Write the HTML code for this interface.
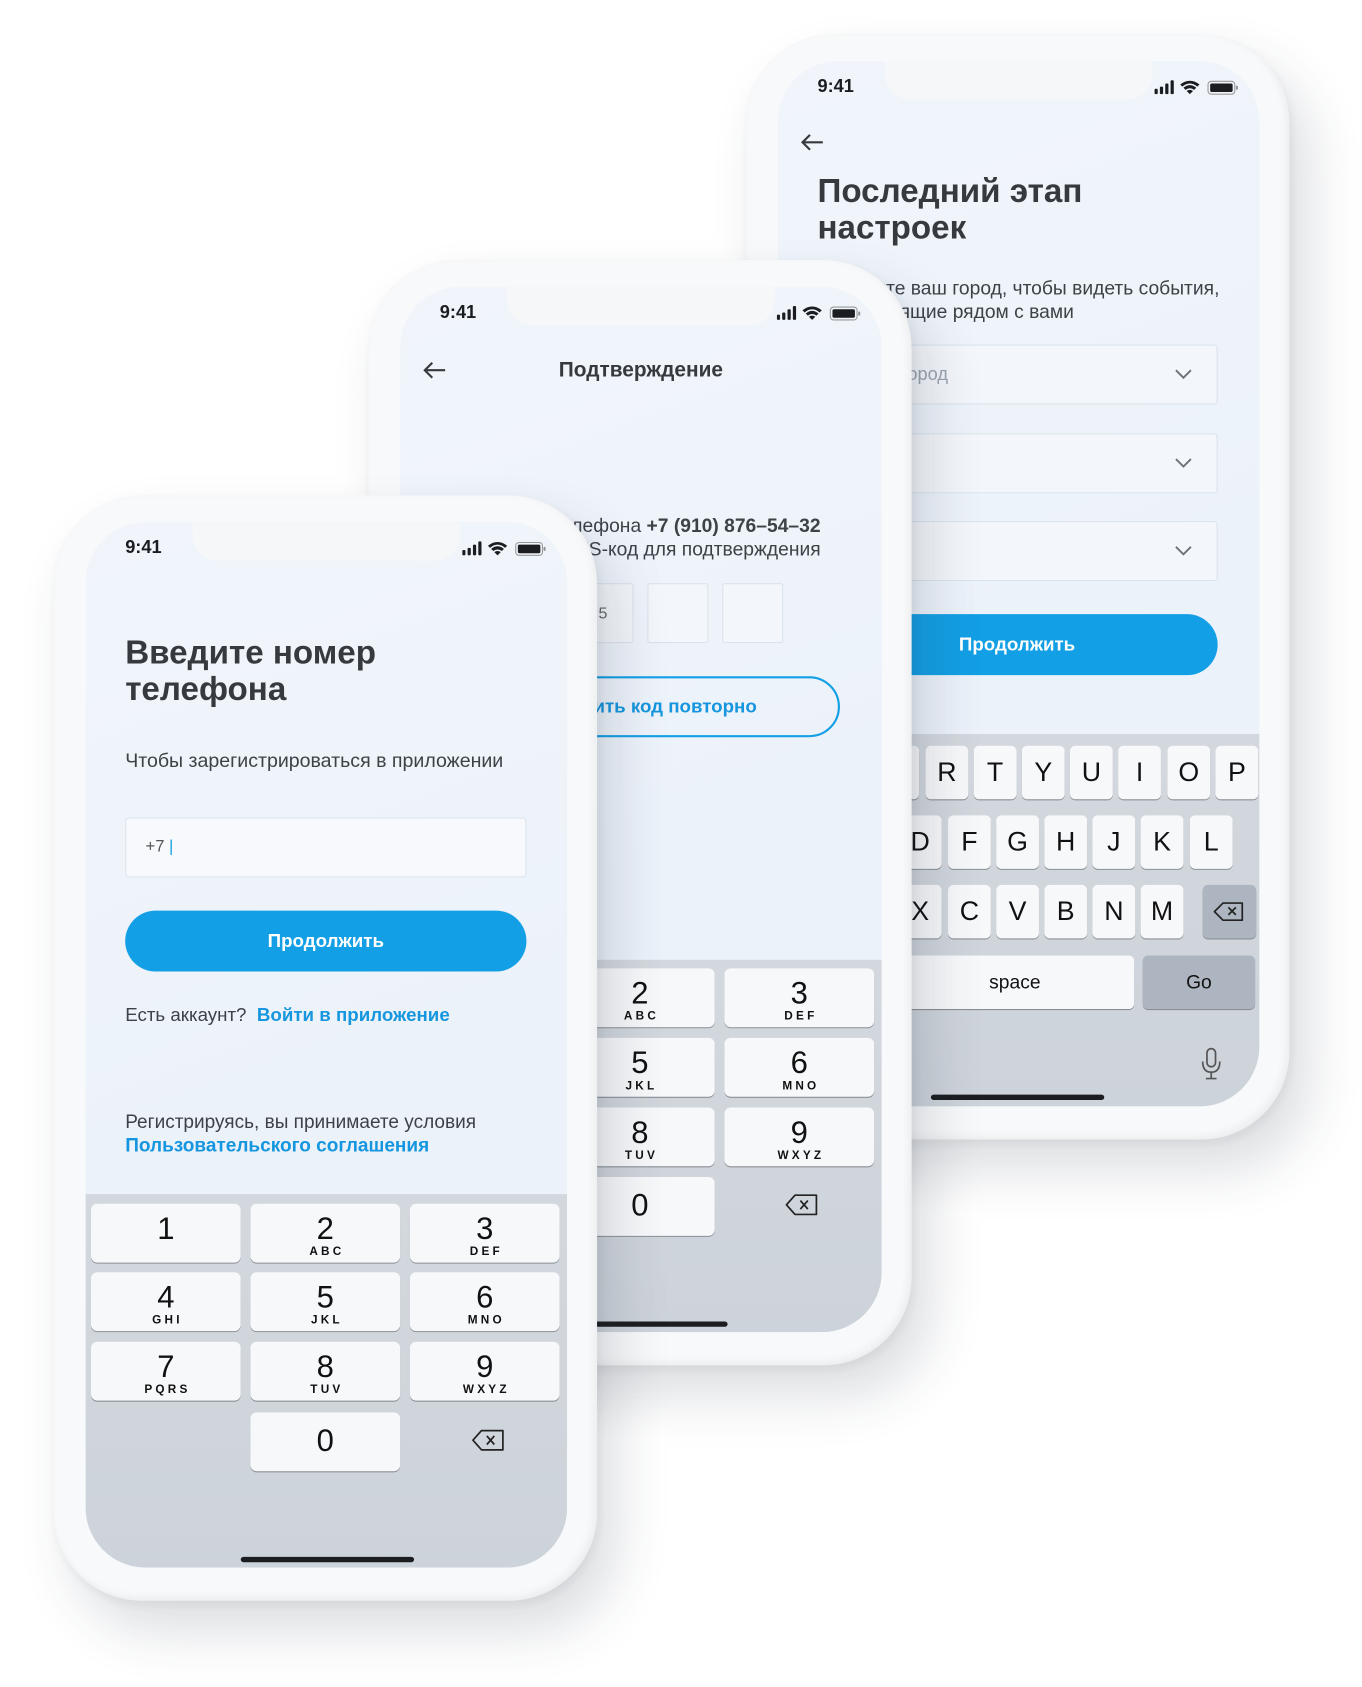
<!DOCTYPE html>
<html><head><meta charset="utf-8">
<style>
*{margin:0;padding:0;box-sizing:border-box}
html,body{width:1362px;height:1678px;overflow:hidden;background:#fff;font-family:"Liberation Sans","DejaVu Sans",sans-serif}
#wrap{position:absolute;left:0;top:0;width:1280px;height:1577px;transform:scale(1.070);transform-origin:0 0}
.phone{position:absolute;width:508px;height:1033px;border-radius:82px;background:#f8f9fa;box-shadow:18px 28px 50px rgba(40,50,70,.16),2px 4px 10px rgba(0,0,0,.06),inset -3px -3px 8px rgba(0,0,0,.05)}
.screen{position:absolute;left:30px;top:25px;width:450px;height:977px;border-radius:56px;overflow:hidden;background:linear-gradient(160deg,#f1f5fb,#e8f0f9)}
.notch{position:absolute;left:100px;top:0;width:250px;height:36px;background:#f6f7f9;border-radius:0 0 24px 24px}
.time{position:absolute;left:37px;top:14px;font-size:17px;font-weight:bold;color:#1b1d20}
.si{position:absolute;left:352px;top:17px}
.abs{position:absolute}
.title{position:absolute;left:37px;font-size:31px;font-weight:bold;color:#363a3f;line-height:34px}
.txt{position:absolute;font-size:18.3px;color:#3d4247;line-height:22px;white-space:nowrap}
.blue{color:#1596de;font-weight:bold}
.btn{position:absolute;left:37px;width:375px;height:57px;border-radius:29px;background:#139fe5;color:#fff;font-size:17.5px;font-weight:bold;text-align:center;line-height:57px}
.field{position:absolute;left:37px;width:375px;height:56px;background:#f7f9fc;border:1px solid #dbe3ec;border-radius:3px}
.kb{position:absolute;left:0;width:450px;bottom:0;background:linear-gradient(180deg,#d3d8de,#cdd3da)}
.key{position:absolute;width:140px;height:55px;background:#f7f8fa;border-radius:6px;box-shadow:0 1px 0 #8b9096;text-align:center;color:#111}
.key b{display:block;font-weight:normal;font-size:29px;line-height:30px;margin-top:9px}
.key i{display:block;font-style:normal;font-weight:bold;font-size:11px;letter-spacing:3px;margin-left:3px}
.home{position:absolute;width:162px;height:5px;border-radius:3px;background:#1b1d20}
.q{position:absolute;width:40px;height:50px;background:#f7f8fa;border-radius:5px;box-shadow:0 1px 0 #8b9096;text-align:center;line-height:50px;font-size:25px;color:#111}
.g{background:#adb5c0}
.dd{position:absolute;left:36px;width:375px;height:56px;background:#f3f6fa;border:1px solid #dbe3ec;border-radius:3px}
.chev{position:absolute;right:22px;top:20px}
.box{position:absolute;top:277px;width:57px;height:56px;background:#f3f6fa;border:1px solid #dbe3ec;border-radius:2px;font-size:15px;color:#666;line-height:56px;text-align:center}
</style></head><body><div id="wrap">

<!-- BACK PHONE -->
<div class="phone" style="left:697px;top:32px">
<div class="screen">
<div class="notch"></div>
<div class="time">9:41</div>
<svg class="si" width="80" height="16" viewBox="0 0 80 16"><rect x="0" y="9" width="3" height="5" rx="1" fill="#1b1d20"/><rect x="5" y="7" width="3" height="7" rx="1" fill="#1b1d20"/><rect x="10" y="4" width="3" height="10" rx="1" fill="#1b1d20"/><rect x="15" y="1" width="3" height="13" rx="1" fill="#1b1d20"/><path d="M24 5 Q33 -2 42 5 L40 7 Q33 1 26 7Z M27 8 Q33 3 39 8 L37 10 Q33 7 29 10Z M30 11 Q33 9 36 11 L33 14Z" fill="#1b1d20"/><rect x="50" y="2" width="25" height="12" rx="3" fill="none" stroke="#999" stroke-width="1"/><rect x="52" y="4" width="21" height="8" rx="1.5" fill="#1b1d20"/><rect x="76" y="6" width="2" height="4" rx="1" fill="#999"/></svg>
<svg class="abs" style="left:20px;top:66px" width="24" height="20" viewBox="0 0 24 20"><path d="M22 10H3M10 3L3 10L10 17" fill="none" stroke="#363a3f" stroke-width="2"/></svg>
<div class="title" style="top:105px">Последний этап<br>настроек</div>
<div class="txt" style="left:36px;top:201px;font-size:18px">Выберите ваш город, чтобы видеть события,<br>происходящие рядом с вами</div>
<div class="dd" style="top:265px"><span class="abs" style="left:76px;top:17px;font-size:17px;color:#9aa3ad">Город</span><svg class="chev" width="18" height="12"><path d="M2 3L9 10L16 3" fill="none" stroke="#6b737c" stroke-width="1.8"/></svg></div>
<div class="dd" style="top:348px"><svg class="chev" width="18" height="12"><path d="M2 3L9 10L16 3" fill="none" stroke="#6b737c" stroke-width="1.8"/></svg></div>
<div class="dd" style="top:430px"><svg class="chev" width="18" height="12"><path d="M2 3L9 10L16 3" fill="none" stroke="#6b737c" stroke-width="1.8"/></svg></div>
<div class="btn" style="left:36px;top:517px">Продолжить</div>
<div class="kb" style="top:629px">
<div class="q" style="left:2px;top:11px">Q</div><div class="q" style="left:47px;top:11px">W</div><div class="q" style="left:92px;top:11px">E</div><div class="q" style="left:138px;top:11px">R</div><div class="q" style="left:183px;top:11px">T</div><div class="q" style="left:228px;top:11px">Y</div><div class="q" style="left:273px;top:11px">U</div><div class="q" style="left:318px;top:11px">I</div><div class="q" style="left:364px;top:11px">O</div><div class="q" style="left:409px;top:11px">P</div>
<div class="q" style="left:23px;top:76px">A</div><div class="q" style="left:68px;top:76px">S</div><div class="q" style="left:113px;top:76px">D</div><div class="q" style="left:159px;top:76px">F</div><div class="q" style="left:204px;top:76px">G</div><div class="q" style="left:249px;top:76px">H</div><div class="q" style="left:294px;top:76px">J</div><div class="q" style="left:339px;top:76px">K</div><div class="q" style="left:385px;top:76px">L</div>
<div class="q g" style="left:2px;top:141px;width:50px">⇧</div>
<div class="q" style="left:68px;top:141px">Z</div><div class="q" style="left:113px;top:141px">X</div><div class="q" style="left:159px;top:141px">C</div><div class="q" style="left:204px;top:141px">V</div><div class="q" style="left:249px;top:141px">B</div><div class="q" style="left:294px;top:141px">N</div><div class="q" style="left:339px;top:141px">M</div>
<div class="q g" style="left:397px;top:141px;width:50px"><svg width="30" height="20" viewBox="0 0 30 20" style="margin-top:15px"><path d="M9 2H27V18H9L1 10Z" fill="none" stroke="#222" stroke-width="1.6" stroke-linejoin="round"/><path d="M14 6L21 13M21 6L14 13" stroke="#222" stroke-width="1.6"/></svg></div>
<div class="q g" style="left:2px;top:207px;width:48px;font-size:17px">123</div>
<div class="q g" style="left:56px;top:207px;width:48px;font-size:20px">☺</div>
<div class="q" style="left:110px;top:207px;width:223px;font-size:18px">space</div>
<div class="q g" style="left:341px;top:207px;width:105px;font-size:18px">Go</div>
<svg class="abs" style="left:395px;top:292px" width="20" height="32" viewBox="0 0 20 32"><rect x="6" y="2" width="8" height="17" rx="4" fill="none" stroke="#555" stroke-width="1.6"/><path d="M2 14Q2 24 10 24Q18 24 18 14M10 24V30M5 30H15" fill="none" stroke="#555" stroke-width="1.6"/></svg>
</div>
<div class="home" style="left:143px;top:966px"></div>
</div></div>

<!-- MIDDLE PHONE -->
<div class="phone" style="left:344px;top:243px">
<div class="screen">
<div class="notch"></div>
<div class="time">9:41</div>
<svg class="si" width="80" height="16" viewBox="0 0 80 16"><rect x="0" y="9" width="3" height="5" rx="1" fill="#1b1d20"/><rect x="5" y="7" width="3" height="7" rx="1" fill="#1b1d20"/><rect x="10" y="4" width="3" height="10" rx="1" fill="#1b1d20"/><rect x="15" y="1" width="3" height="13" rx="1" fill="#1b1d20"/><path d="M24 5 Q33 -2 42 5 L40 7 Q33 1 26 7Z M27 8 Q33 3 39 8 L37 10 Q33 7 29 10Z M30 11 Q33 9 36 11 L33 14Z" fill="#1b1d20"/><rect x="50" y="2" width="25" height="12" rx="3" fill="none" stroke="#999" stroke-width="1"/><rect x="52" y="4" width="21" height="8" rx="1.5" fill="#1b1d20"/><rect x="76" y="6" width="2" height="4" rx="1" fill="#999"/></svg>
<svg class="abs" style="left:20px;top:68px" width="24" height="20" viewBox="0 0 24 20"><path d="M22 10H3M10 3L3 10L10 17" fill="none" stroke="#363a3f" stroke-width="2"/></svg>
<div class="abs" style="left:0;width:450px;top:67px;text-align:center;font-size:19.5px;font-weight:bold;color:#363a3f">Подтверждение</div>
<div class="txt" style="left:0;width:450px;text-align:center;top:212px;font-size:18px">На номер телефона <b>+7 (910) 876–54–32</b><br>отправлен SMS-код для подтверждения</div>
<div class="box" style="left:91px">3</div><div class="box" style="left:161px">5</div><div class="box" style="left:231px"></div><div class="box" style="left:301px"></div>
<div class="abs" style="left:39px;top:364px;width:372px;height:57px;border:2px solid #139fe5;border-radius:29px;text-align:center;line-height:53px;font-size:17.5px" ><span class="blue">Отправить код повторно</span></div>
<div class="kb" style="top:629px">
<div class="key" style="left:5px;top:8px"><b>1</b></div><div class="key" style="left:154px;top:8px"><b>2</b><i>ABC</i></div><div class="key" style="left:303px;top:8px"><b>3</b><i>DEF</i></div>
<div class="key" style="left:5px;top:73px"><b>4</b><i>GHI</i></div><div class="key" style="left:154px;top:73px"><b>5</b><i>JKL</i></div><div class="key" style="left:303px;top:73px"><b>6</b><i>MNO</i></div>
<div class="key" style="left:5px;top:138px"><b>7</b><i>PQRS</i></div><div class="key" style="left:154px;top:138px"><b>8</b><i>TUV</i></div><div class="key" style="left:303px;top:138px"><b>9</b><i>WXYZ</i></div>
<div class="key" style="left:154px;top:203px"><b style="margin-top:12px">0</b></div>
<svg class="abs" style="left:359px;top:218px" width="32" height="22" viewBox="0 0 32 22"><path d="M10 2H30V20H10L2 11Z" fill="none" stroke="#222" stroke-width="1.6" stroke-linejoin="round"/><path d="M15 7L22 15M22 7L15 15" stroke="#222" stroke-width="1.6"/></svg>
</div>
<div class="home" style="left:144px;top:967px"></div>
</div></div>

<!-- FRONT PHONE -->
<div class="phone" style="left:50px;top:463px">
<div class="screen">
<div class="notch"></div>
<div class="time">9:41</div>
<svg class="si" width="80" height="16" viewBox="0 0 80 16"><rect x="0" y="9" width="3" height="5" rx="1" fill="#1b1d20"/><rect x="5" y="7" width="3" height="7" rx="1" fill="#1b1d20"/><rect x="10" y="4" width="3" height="10" rx="1" fill="#1b1d20"/><rect x="15" y="1" width="3" height="13" rx="1" fill="#1b1d20"/><path d="M24 5 Q33 -2 42 5 L40 7 Q33 1 26 7Z M27 8 Q33 3 39 8 L37 10 Q33 7 29 10Z M30 11 Q33 9 36 11 L33 14Z" fill="#1b1d20"/><rect x="50" y="2" width="25" height="12" rx="3" fill="none" stroke="#999" stroke-width="1"/><rect x="52" y="4" width="21" height="8" rx="1.5" fill="#1b1d20"/><rect x="76" y="6" width="2" height="4" rx="1" fill="#999"/></svg>
<div class="title" style="top:105px">Введите номер<br>телефона</div>
<div class="txt" style="left:37px;top:212px">Чтобы зарегистрироваться в приложении</div>
<div class="field" style="top:276px"><span class="abs" style="left:18px;top:18px;font-size:15.5px;color:#555">+7 <span style="color:#139fe5">|</span></span></div>
<div class="btn" style="top:363px">Продолжить</div>
<div class="txt" style="left:37px;top:449px;font-size:17.5px">Есть аккаунт?&nbsp; <span class="blue">Войти в приложение</span></div>
<div class="txt" style="left:37px;top:549px;font-size:17.8px">Регистрируясь, вы принимаете условия<br><span class="blue">Пользовательского соглашения</span></div>
<div class="kb" style="top:628px">
<div class="key" style="left:5px;top:9px"><b>1</b></div><div class="key" style="left:154px;top:9px"><b>2</b><i>ABC</i></div><div class="key" style="left:303px;top:9px"><b>3</b><i>DEF</i></div>
<div class="key" style="left:5px;top:73px"><b>4</b><i>GHI</i></div><div class="key" style="left:154px;top:73px"><b>5</b><i>JKL</i></div><div class="key" style="left:303px;top:73px"><b>6</b><i>MNO</i></div>
<div class="key" style="left:5px;top:138px"><b>7</b><i>PQRS</i></div><div class="key" style="left:154px;top:138px"><b>8</b><i>TUV</i></div><div class="key" style="left:303px;top:138px"><b>9</b><i>WXYZ</i></div>
<div class="key" style="left:154px;top:204px"><b style="margin-top:12px">0</b></div>
<svg class="abs" style="left:360px;top:219px" width="32" height="22" viewBox="0 0 32 22"><path d="M10 2H30V20H10L2 11Z" fill="none" stroke="#222" stroke-width="1.6" stroke-linejoin="round"/><path d="M15 7L22 15M22 7L15 15" stroke="#222" stroke-width="1.6"/></svg>
</div>
<div class="home" style="left:145px;top:967px"></div>
</div></div>

</div></body></html>
